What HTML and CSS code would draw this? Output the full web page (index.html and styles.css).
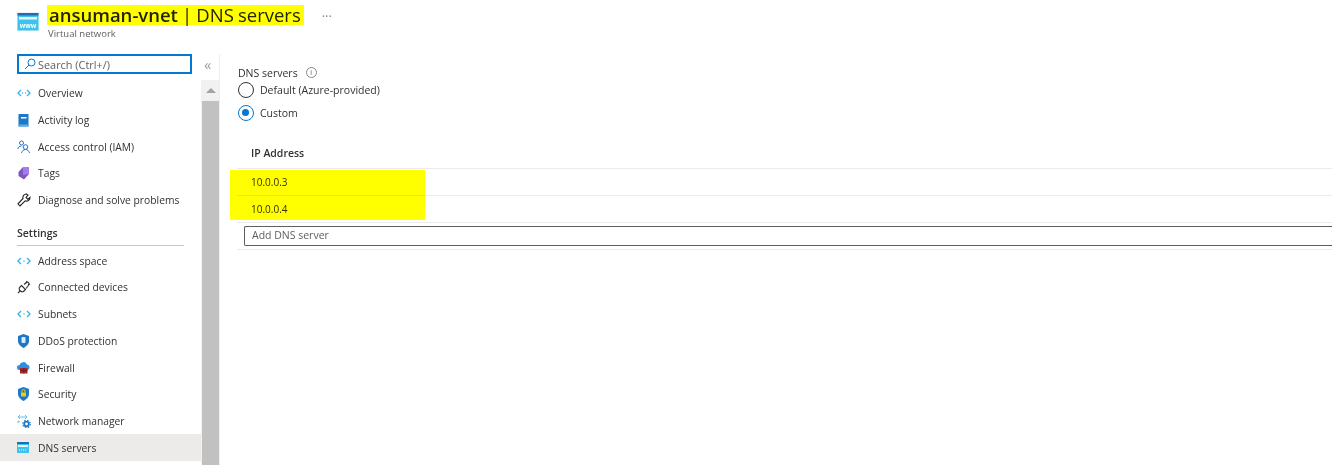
FILE: index.html
```html
<!DOCTYPE html>
<html lang="en">
<head>
    <meta charset="UTF-8">
    <title>ansuman-vnet | DNS servers</title>
    <link rel="stylesheet" href="styles.css">
</head>
<body>
    <header class="page-head">
        <svg class="head-icon" width="22" height="19" viewBox="0 0 22 19">
            <rect width="22" height="19" fill="#f0f0f0"/>
            <rect x="0.500" y="1" width="21" height="17.500" fill="#3cc4ec"/>
            <rect x="0.500" y="1" width="21" height="2.500" fill="#1c6fb5"/>
            <rect x="2" y="5" width="18" height="2.500" fill="#e4f6fc"/>
            <text x="11" y="15.500" text-anchor="middle" class="www">www</text>
        </svg>
        <div>
            <h1><span class="marker"><b>ansuman-vnet</b> | DNS servers</span></h1>
            <p class="subtitle">Virtual network</p>
        </div>
        <span class="more">···</span>
    </header>

    <div class="main">
        <aside class="sidebar">
            <div class="search-row">
                <div class="search">
                    <svg width="12" height="12" viewBox="0 0 12 12" fill="none" stroke="#0078d4">
                        <circle cx="7.500" cy="4.500" r="3.500"/>
                        <path d="M5 7L1 11"/>
                    </svg>
                    <span>Search (Ctrl+/)</span>
                </div>
                <span class="collapse">«</span>
            </div>
            <div class="menu-wrap">
                <nav class="menu">
                    <a class="item">
                        <svg width="14" height="14" viewBox="0 0 14 14" fill="none" stroke-width="1.400"><path d="M4 4L1 7l3 3" stroke="#3cb4ea"/><path d="M10 4l3 3-3 3" stroke="#3cb4ea"/><path d="M5 7h1" stroke="#3cb4ea"/><path d="M8 7h1" stroke="#7fba00"/></svg>
                        Overview
                    </a>
                    <a class="item">
                        <svg width="14" height="14" viewBox="0 0 14 14"><rect x="1.500" y="1" width="10" height="12.500" fill="#1e78c8"/><rect x="4" y="4" width="5.500" height="1.500" fill="#ffffff"/><rect x="1.500" y="11.500" width="10" height="2" fill="#5ab0e8"/></svg>
                        Activity log
                    </a>
                    <a class="item">
                        <svg width="14" height="14" viewBox="0 0 14 14" fill="none" stroke="#2a74c9"><circle cx="4.500" cy="3" r="2"/><path d="M1 9c0-2 1.500-3 3.500-3"/><circle cx="8.500" cy="7" r="2.300"/><path d="M4.500 13c.5-2 2-3.500 4-3.500s3.500 1.500 4 3.500"/></svg>
                        Access control (IAM)
                    </a>
                    <a class="item">
                        <svg width="14" height="14" viewBox="0 0 14 14"><path d="M6 1h6v7l-5 5.500L1.500 10V6z" fill="#7c58bd"/><path d="M6 1h6v7L6 9z" fill="#a67af4"/></svg>
                        Tags
                    </a>
                    <a class="item">
                        <svg width="14" height="14" viewBox="0 0 14 14" fill="none" stroke="#222222" stroke-width="1.100"><path d="M9.500 1A3.500 3.500 0 0 0 6 5.500L1 10.800 3 13l5.200-5.200A3.500 3.500 0 0 0 13 4.500l-2.200 1.800L9 4.500 11 2z"/></svg>
                        Diagnose and solve problems
                    </a>

                    <div class="group">Settings</div>

                    <a class="item">
                        <svg width="14" height="14" viewBox="0 0 14 14" fill="none" stroke-width="1.400"><path d="M4 4L1 7l3 3M10 4l3 3-3 3" stroke="#3cb4ea"/><path d="M6.500 7h1" stroke="#3cb4ea"/></svg>
                        Address space
                    </a>
                    <a class="item">
                        <svg width="14" height="14" viewBox="0 0 14 14" fill="none" stroke="#333333" stroke-width="1.100"><path d="M1 13l2.500-2.500"/><path d="M4.500 5.500l4 4-1.500 1.500a2.400 2.400 0 0 1-3.500 0 2.400 2.400 0 0 1-.5-4z"/><path d="M7 4.500L9.500 2.500c1-.8 2.500 0 2.500 1s-.3 1.500-1 2.500L9 8.500"/><path d="M10 1l-1 2M13 4l-2 1"/></svg>
                        Connected devices
                    </a>
                    <a class="item">
                        <svg width="14" height="14" viewBox="0 0 14 14" fill="none" stroke-width="1.400"><path d="M4 4L1 7l3 3M10 4l3 3-3 3" stroke="#3cb4ea"/><path d="M6.500 7h1" stroke="#7fba00"/></svg>
                        Subnets
                    </a>
                    <a class="item">
                        <svg width="14" height="14" viewBox="0 0 14 14"><path d="M6.500 0L12 2v5c0 3.500-3 5.500-5.500 7C4 12.500 1 10.500 1 7V2z" fill="#1e78c8"/><rect x="4.500" y="3" width="4" height="6" rx="1" fill="#d8eefa"/></svg>
                        DDoS protection
                    </a>
                    <a class="item">
                        <svg width="14" height="14" viewBox="0 0 14 14"><path d="M2.500 9a2.500 2.500 0 0 1 0-5A4 4 0 0 1 10 3.500 2.800 2.800 0 0 1 10.500 9z" fill="#2a8fe0"/><rect x="3" y="7" width="7.500" height="5.500" fill="#a4262c"/><path d="M3 9.500h7.500M6.800 7v5.500" stroke="#6a1418" stroke-width=".7"/></svg>
                        Firewall
                    </a>
                    <a class="item">
                        <svg width="14" height="14" viewBox="0 0 14 14"><path d="M6.500 0L12 2v5c0 3.500-3 5.500-5.500 7C4 12.500 1 10.500 1 7V2z" fill="#1e78c8"/><rect x="4" y="5.500" width="5" height="4" fill="#f2c811"/><path d="M5 5.500V4a1.500 1.500 0 0 1 3 0v1.500" fill="none" stroke="#f2c811"/></svg>
                        Security
                    </a>
                    <a class="item">
                        <svg width="14" height="14" viewBox="0 0 14 14" fill="none"><path d="M1.500 3h8M3 1L1 3l2 2M8 1l2 2-2 2" stroke="#6bbfe8"/><path d="M1 7l2 1M1 7v2" stroke="#6bbfe8"/><circle cx="9.500" cy="10" r="2.300" stroke="#1e78c8" stroke-width="1.800"/><circle cx="9.500" cy="10" r="3.800" stroke="#1e78c8" stroke-width="1.100" stroke-dasharray="1.500 1.500"/></svg>
                        Network manager
                    </a>
                    <a class="item active">
                        <svg width="14" height="14" viewBox="0 0 14 14"><rect x="0" y="1" width="12" height="11" fill="#3cc4ec"/><rect x="0" y="1" width="12" height="2" fill="#1c6fb5"/><rect x="1" y="4" width="10" height="2" fill="#e4f6fc"/><path d="M2 9h8" stroke="#e4f6fc" stroke-dasharray="1 1"/></svg>
                        DNS servers
                    </a>
                </nav>
                <div class="scrollbar">
                    <span class="arrow"></span>
                    <div class="thumb"></div>
                </div>
            </div>
        </aside>

        <section class="content">
            <div class="field-label">
                DNS servers
                <span class="info">i</span>
            </div>
            <label class="radio"><span class="dot"></span>Default (Azure-provided)</label>
            <label class="radio"><span class="dot on"></span>Custom</label>

            <div class="table">
                <div class="th">IP Address</div>
                <div class="row">10.0.0.3</div>
                <div class="row">10.0.0.4</div>
                <div class="row input-row">
                    <div class="text-input">Add DNS server</div>
                </div>
                <div class="highlight"></div>
            </div>
        </section>
    </div>
</body>
</html>
```

FILE: styles.css
```css
body {
    margin: 0;
    height: 465px;
    overflow: hidden;
    font-family: "Open Sans", Arial, sans-serif;
    font-size: 10.5px;
    color: #323130;
    background-color: white;
}

.page-head {
    display: flex;
    align-items: flex-start;
    height: 54px;
    padding: 5px 0 0 17px;
    box-sizing: border-box;
}

.head-icon {
    margin: 7px 8px 0 0;
}

.www {
    font-family: "Open Sans", Arial, sans-serif;
    font-size: 6.5px;
    font-weight: 700;
    fill: white;
}

h1 {
    margin: 0;
    font-size: 18.5px;
    font-weight: 400;
    line-height: 20px;
    word-spacing: -0.7px;
}

h1 b {
    font-weight: 600;
}

.marker {
    display: inline-block;
    padding: 0 3px 0 2px;
    background-color: #ffff00;
    color: #252400;
}

.subtitle {
    margin: 2px 0 0 1px;
    font-size: 9.5px;
    color: #605e5c;
}

.more {
    margin: 2px 0 0 18px;
    color: #8a8886;
    font-size: 13px;
}

.main {
    display: flex;
    height: 411px;
}

.sidebar {
    width: 220px;
    flex-shrink: 0;
    border-right: 1px solid #eeeeee;
    box-sizing: border-box;
}

.search-row {
    display: flex;
    align-items: center;
    height: 20px;
    padding-left: 17px;
}

.search {
    display: flex;
    align-items: center;
    gap: 2px;
    width: 175px;
    height: 20px;
    padding-left: 5px;
    border: 2px solid #0078d4;
    box-sizing: border-box;
    font-size: 10.9px;
    color: #605e5c;
}

.collapse {
    margin-left: 12px;
    color: #a19f9d;
    font-size: 15px;
    line-height: 18px;
}

.menu-wrap {
    display: flex;
    height: 385px;
    margin-top: 6px;
}

.menu {
    width: 201px;
    flex-shrink: 0;
    font-size: 10.3px;
}

.item {
    display: flex;
    align-items: center;
    gap: 7px;
    height: 26.7px;
    padding-left: 17px;
    box-sizing: border-box;
}

.item svg {
    flex-shrink: 0;
}

.item.active {
    background-color: #edebe9;
}

.group {
    height: 19px;
    margin: 7px 17px 1px 17px;
    padding-top: 6px;
    border-bottom: 1px solid #c8c6c4;
    font-weight: 600;
    font-size: 10.5px;
}

.scrollbar {
    width: 18px;
    padding-left: 1px;
    background-color: #f1f1f1;
}

.arrow {
    display: block;
    width: 0;
    height: 0;
    margin: 8px auto 0;
    border-left: 5px solid transparent;
    border-right: 5px solid transparent;
    border-bottom: 5px solid #a3a3a3;
}

.thumb {
    height: 364px;
    margin-top: 8px;
    background-color: #c1c1c1;
}

.content {
    flex: 1;
    padding: 13px 0 0 17px;
}

.field-label {
    display: flex;
    align-items: center;
    height: 11px;
    padding-left: 1px;
}

.info {
    display: inline-flex;
    align-items: center;
    justify-content: center;
    width: 9px;
    height: 9px;
    margin-left: 8px;
    border: 1px solid #8a8886;
    border-radius: 50%;
    font-size: 7px;
    color: #605e5c;
}

.radio {
    display: flex;
    align-items: center;
    gap: 6px;
    height: 23px;
    padding-left: 1px;
}

.dot {
    position: relative;
    width: 16px;
    height: 16px;
    border: 1.5px solid #323130;
    border-radius: 50%;
    box-sizing: border-box;
}

.dot.on {
    border-color: #0078d4;
}

.dot.on::after {
    content: "";
    position: absolute;
    top: 3px;
    left: 3px;
    width: 7px;
    height: 7px;
    border-radius: 50%;
    background-color: #0078d4;
}

.table {
    position: relative;
    margin-top: 13px;
}

.th {
    height: 32px;
    padding: 9px 0 0 14px;
    box-sizing: border-box;
    font-weight: 600;
    border-bottom: 1px solid #edebe9;
}

.row {
    display: flex;
    align-items: center;
    height: 27px;
    padding-left: 14px;
    box-sizing: border-box;
    border-bottom: 1px solid #edebe9;
    font-size: 10px;
}

.input-row {
    padding-left: 7px;
    font-size: 10.5px;
}

.text-input {
    flex: 1;
    height: 20px;
    padding: 1px 0 0 7px;
    border: 1px solid #605e5c;
    border-right: 0;
    border-radius: 2px 0 0 2px;
    box-sizing: border-box;
    color: #605e5c;
}

.highlight {
    position: absolute;
    top: 33px;
    left: -7px;
    width: 195px;
    height: 50px;
    background-color: #ffff00;
    mix-blend-mode: multiply;
}
```
